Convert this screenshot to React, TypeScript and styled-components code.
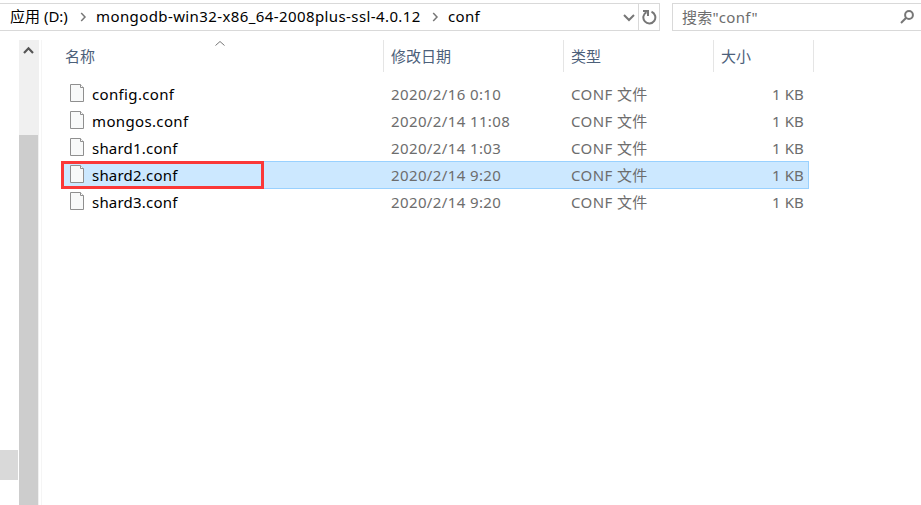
import React from "react";
import styled, { createGlobalStyle } from "styled-components";

const GlobalStyle = createGlobalStyle`
  * { box-sizing: border-box; }
  body { margin: 0; background: #fff; overflow: hidden; }
`;

const Window = styled.div`
  width: 921px;
  height: 505px;
  display: flex;
  flex-direction: column;
  overflow: hidden;
  background: #fff;
  color: #000;
  font: 15px/20px "Noto Sans", "Noto Sans CJK SC", sans-serif;
  white-space: pre;
`;

const TopBar = styled.header`
  display: flex;
  flex: none;
  height: 40px;
  padding-top: 3px;
`;

const AddressBar = styled.nav`
  display: flex;
  flex: none;
  align-items: center;
  width: 660px;
  height: 28px;
  border: 1px solid #d9d9d9;
  border-left: 0;
`;

const Crumb = styled.span<{ $width: number; $spacing?: number }>`
  flex: none;
  width: ${(p) => p.$width}px;
  padding-bottom: 2px;
  letter-spacing: ${(p) => p.$spacing ?? 0}px;
`;

const CrumbArrow = styled.svg`
  flex: none;
  width: 7px;
  height: 10px;
  margin-right: 9px;
`;

const Crumbs = styled.div`
  display: flex;
  align-items: center;
  flex: 1;
  padding-left: 10px;
`;

const DropButton = styled.div`
  display: flex;
  align-items: center;
  width: 15px;
  padding-top: 2px;
`;

const RefreshButton = styled.div`
  display: flex;
  align-items: center;
  justify-content: center;
  width: 21px;
  height: 26px;
  border-left: 1px solid #d9d9d9;
`;

const SearchBox = styled.div`
  display: flex;
  flex: none;
  align-items: center;
  justify-content: space-between;
  width: 249px;
  height: 28px;
  margin-left: 12px;
  padding: 0 7px 0 9px;
  border: 1px solid #d9d9d9;
  border-right: 0;
  color: #6d6d6d;
`;

const SearchText = styled.span`
  padding-bottom: 1px;
  letter-spacing: 0.25px;
`;

const Body = styled.main`
  display: flex;
  flex: 1;
`;

const NavPane = styled.aside`
  display: flex;
  flex-direction: column;
  justify-content: flex-end;
  width: 19px;
  padding-bottom: 25px;
`;

const NavItem = styled.div`
  width: 18px;
  height: 30px;
  background: #d9d9d9;
`;

const ScrollTrack = styled.div`
  display: flex;
  flex-direction: column;
  width: 20px;
  background: #f0f0f0;
`;

const ScrollUp = styled.div`
  height: 95px;
  padding: 6px 0 0 4px;
  line-height: 0;
`;

const ScrollThumb = styled.div`
  flex: 1;
  width: 19px;
  background: #cdcdcd;
`;

const FilePane = styled.section`
  margin-left: 2px;
  padding-left: 19px;
  border-left: 1px solid #f5f5f5;
`;

const HeaderRow = styled.div`
  display: grid;
  grid-template-columns: 323px 180px 150px 100px;
  height: 32px;
  margin-bottom: 8px;
`;

const HeaderCell = styled.div<{ $indent: number }>`
  position: relative;
  padding: 6px 0 0 ${(p) => p.$indent}px;
  border-right: 1px solid #e5e5e5;
  color: #4c607a;
`;

const SortMark = styled.svg`
  position: absolute;
  left: 154px;
  top: 0;
`;

const Row = styled.div<{ $selected?: boolean }>`
  position: relative;
  display: grid;
  grid-template-columns: 30px 299px 180px 150px 83px;
  align-items: center;
  width: 748px;
  height: 28px;
  margin-bottom: -1px;
  border: 1px solid ${(p) => (p.$selected ? "#99d1ff" : "transparent")};
  background: ${(p) => (p.$selected ? "#cce8ff" : "transparent")};
`;

const Highlight = styled.div`
  position: absolute;
  left: -1px;
  top: -1px;
  width: 203px;
  height: 28px;
  border: 3px solid #fb3838;
`;

const FileIcon = styled.svg`
  margin-left: 8px;
  margin-top: -2px;
`;

const FileName = styled.span<{ $spacing: number }>`
  letter-spacing: ${(p) => p.$spacing}px;
`;

const Detail = styled.span<{ $right?: boolean }>`
  color: #6d6d6d;
  letter-spacing: ${(p) => (p.$right ? 0.15 : 0.38)}px;
  text-align: ${(p) => (p.$right ? "right" : "left")};
`;

const FILES = [
  { name: "config.conf", date: "2020/2/16 0:10", spacing: 0.35 },
  { name: "mongos.conf", date: "2020/2/14 11:08", spacing: 0.35 },
  { name: "shard1.conf", date: "2020/2/14 1:03", spacing: 0.2 },
  { name: "shard2.conf", date: "2020/2/14 9:20", spacing: 0.2, selected: true },
  { name: "shard3.conf", date: "2020/2/14 9:20", spacing: 0.2 },
];

const Arrow = () => (
  <CrumbArrow viewBox="0 0 7 10" fill="none" stroke="#777" strokeWidth="1.5">
    <path d="M1.2 1 5 5 1.2 9" />
  </CrumbArrow>
);

const Page = () => (
  <FileIcon width="15" height="18" viewBox="0 0 15 18" fill="#f8f9f9" stroke="#8f8f8f">
    <path d="M.5.5h10l3 3v14H.5z" />
    <path d="M10.5.5v3h3" fill="#fff" />
  </FileIcon>
);

export default function App() {
  return (
    <Window>
      <GlobalStyle />
      <TopBar>
        <AddressBar>
          <Crumbs>
            <Crumb $width={70}>应用 (D:)</Crumb>
            <Arrow />
            <Crumb $width={336} $spacing={0.4}>mongodb-win32-x86_64-2008plus-ssl-4.0.12</Crumb>
            <Arrow />
            <Crumb $width={40} $spacing={0.3}>conf</Crumb>
          </Crumbs>
          <DropButton>
            <svg width="12" height="8" viewBox="0 0 12 8" fill="none" stroke="#777" strokeWidth="2">
              <path d="m1 1 5 5 5-5" />
            </svg>
          </DropButton>
          <RefreshButton>
            <svg width="15" height="16" viewBox="0 0 15 16" fill="none" stroke="#777" strokeWidth="2">
              <path d="M9.5 2.8a6 6 0 1 1-5 .3" />
              <path d="M1 2h5v5" />
            </svg>
          </RefreshButton>
        </AddressBar>
        <SearchBox>
          <SearchText>搜索"conf"</SearchText>
          <svg width="14" height="14" viewBox="0 0 14 14" fill="none" stroke="#777" strokeWidth="2">
            <circle cx="9" cy="5" r="3.9" />
            <path d="M6.2 7.8 1 13" />
          </svg>
        </SearchBox>
      </TopBar>
      <Body>
        <NavPane>
          <NavItem />
        </NavPane>
        <ScrollTrack>
          <ScrollUp>
            <svg width="11" height="9" viewBox="0 0 11 9" fill="none" stroke="#555" strokeWidth="2.2">
              <path d="m1 7 4.5-4.7L10 7" />
            </svg>
          </ScrollUp>
          <ScrollThumb />
        </ScrollTrack>
        <FilePane>
          <HeaderRow>
            <HeaderCell $indent={4}>
              名称
              <SortMark width="10" height="7" viewBox="0 0 10 7" fill="none" stroke="#777">
                <path d="m.5 5.5 4.5-4 4.5 4" />
              </SortMark>
            </HeaderCell>
            <HeaderCell $indent={7}>修改日期</HeaderCell>
            <HeaderCell $indent={7}>类型</HeaderCell>
            <HeaderCell $indent={7}>大小</HeaderCell>
          </HeaderRow>
          {FILES.map((f) => (
            <Row key={f.name} $selected={f.selected}>
              <Page />
              <FileName $spacing={f.spacing}>{f.name}</FileName>
              <Detail>{f.date}</Detail>
              <Detail>CONF 文件</Detail>
              <Detail $right>1 KB</Detail>
              {f.selected && <Highlight />}
            </Row>
          ))}
        </FilePane>
      </Body>
    </Window>
  );
}
